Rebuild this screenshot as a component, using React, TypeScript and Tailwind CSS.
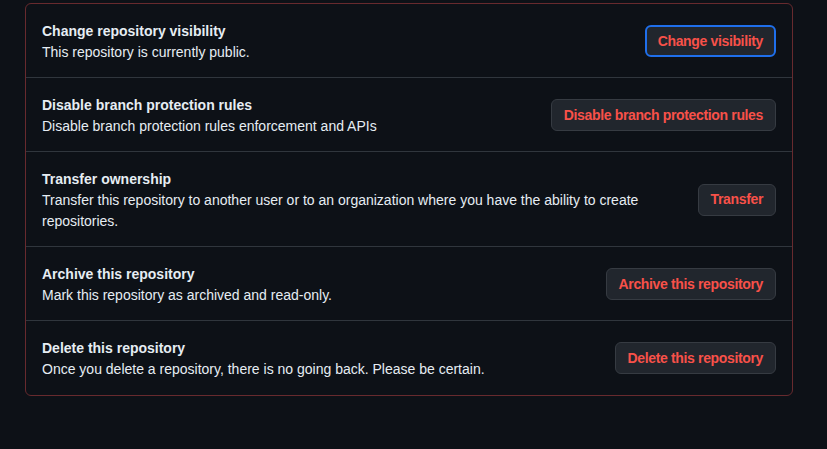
const rows = [
  {
    title: 'Change repository visibility',
    desc: 'This repository is currently public.',
    action: 'Change visibility',
    focused: true,
  },
  {
    title: 'Disable branch protection rules',
    desc: 'Disable branch protection rules enforcement and APIs',
    action: 'Disable branch protection rules',
  },
  {
    title: 'Transfer ownership',
    desc: 'Transfer this repository to another user or to an organization where you have the ability to create repositories.',
    action: 'Transfer',
  },
  {
    title: 'Archive this repository',
    desc: 'Mark this repository as archived and read-only.',
    action: 'Archive this repository',
  },
  {
    title: 'Delete this repository',
    desc: 'Once you delete a repository, there is no going back. Please be certain.',
    action: 'Delete this repository',
  },
];

export default function App() {
  return (
    <div className="min-h-[449px] bg-[#0d1117] pl-[25px] pt-[3px] font-['Liberation_Sans',sans-serif] text-[14px] leading-[21px] text-[#e6edf3]">
      <div className="w-[768px] rounded-md border border-[#672a2e]">
        {rows.map((row, i) => (
          <div
            key={row.title}
            className={`flex items-center gap-4 px-4 pb-[15px] pt-4 last:pb-4 ${i > 0 ? 'border-t border-[#30363d]' : ''}`}
          >
            <div className="min-w-0 flex-1 translate-y-px">
              <p className="font-semibold">{row.title}</p>
              <p className="max-w-[610px]">{row.desc}</p>
            </div>
            <button
              type="button"
              className={`inline-flex h-8 shrink-0 items-center rounded-md bg-[#21262d] px-3 font-semibold tracking-[-0.35px] text-[#f85149] ${
                row.focused ? 'border-2 border-[#1f6feb] px-[11px]' : 'border border-[#363b42]'
              }`}
            >
              {row.action}
            </button>
          </div>
        ))}
      </div>
    </div>
  );
}
